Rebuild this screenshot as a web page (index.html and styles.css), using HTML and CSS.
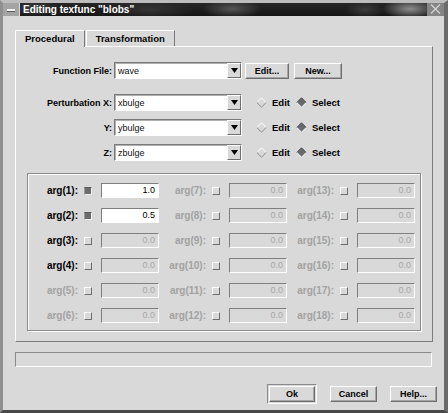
FILE: index.html
```html
<!DOCTYPE html>
<html>
<head>
<meta charset="utf-8">
<link rel="stylesheet" href="styles.css">
</head>
<body>
<div class="window">
  <div class="titlebar">
    <div class="tb-menu"><span class="dash"></span></div>
    <div class="tb-title">Editing texfunc "blobs"</div>
    <div class="tb-close">
      <svg width="17" height="13" viewBox="0 0 17 13"><path d="M4 1.5 L13 10.5 M13 1.5 L4 10.5" stroke="#d4d4d4" stroke-width="1.3" fill="none"/></svg>
    </div>
  </div>
  <div class="content">
    <div class="tabs">
      <div class="tab active">Procedural</div>
      <div class="tab">Transformation</div>
    </div>
    <div class="panel">
      <div class="frow">
        <div class="flabel">Function File:</div>
        <div class="combo"><span class="ctext">wave</span><span class="carrow"><svg width="7" height="6" viewBox="0 0 7 6"><path d="M0 0 H7 L3.5 5 Z" fill="#000"/></svg></span></div>
        <div class="btn btn-edit">Edit...</div>
        <div class="btn btn-new">New...</div>
      </div>
      <div class="frow frow-x">
        <div class="flabel">Perturbation X:</div>
        <div class="combo"><span class="ctext">xbulge</span><span class="carrow"><svg width="7" height="6" viewBox="0 0 7 6"><path d="M0 0 H7 L3.5 5 Z" fill="#000"/></svg></span></div>
        <div class="radios">
          <svg class="dia" width="11" height="11" viewBox="0 0 11 11"><polyline points="0.8,5.5 5.5,0.8 10.2,5.5" stroke="#fff" fill="none"/><polyline points="0.8,5.5 5.5,10.2 10.2,5.5" stroke="#8a8a8a" fill="none"/></svg>
          <span class="rtext">Edit</span>
          <svg class="dia dia-sel" width="11" height="11" viewBox="0 0 11 11"><polygon points="5.5,0.8 10.2,5.5 5.5,10.2 0.8,5.5" fill="#6a6a6a"/><polyline points="0.8,5.5 5.5,0.8 10.2,5.5" stroke="#4a4a4a" fill="none"/><polyline points="0.8,5.5 5.5,10.2 10.2,5.5" stroke="#fff" fill="none"/></svg>
          <span class="rtext">Select</span>
        </div>
      </div>
      <div class="frow frow-yz">
        <div class="flabel">Y:</div>
        <div class="combo"><span class="ctext">ybulge</span><span class="carrow"><svg width="7" height="6" viewBox="0 0 7 6"><path d="M0 0 H7 L3.5 5 Z" fill="#000"/></svg></span></div>
        <div class="radios">
          <svg class="dia" width="11" height="11" viewBox="0 0 11 11"><polyline points="0.8,5.5 5.5,0.8 10.2,5.5" stroke="#fff" fill="none"/><polyline points="0.8,5.5 5.5,10.2 10.2,5.5" stroke="#8a8a8a" fill="none"/></svg>
          <span class="rtext">Edit</span>
          <svg class="dia dia-sel" width="11" height="11" viewBox="0 0 11 11"><polygon points="5.5,0.8 10.2,5.5 5.5,10.2 0.8,5.5" fill="#6a6a6a"/><polyline points="0.8,5.5 5.5,0.8 10.2,5.5" stroke="#4a4a4a" fill="none"/><polyline points="0.8,5.5 5.5,10.2 10.2,5.5" stroke="#fff" fill="none"/></svg>
          <span class="rtext">Select</span>
        </div>
      </div>
      <div class="frow frow-yz">
        <div class="flabel">Z:</div>
        <div class="combo"><span class="ctext">zbulge</span><span class="carrow"><svg width="7" height="6" viewBox="0 0 7 6"><path d="M0 0 H7 L3.5 5 Z" fill="#000"/></svg></span></div>
        <div class="radios">
          <svg class="dia" width="11" height="11" viewBox="0 0 11 11"><polyline points="0.8,5.5 5.5,0.8 10.2,5.5" stroke="#fff" fill="none"/><polyline points="0.8,5.5 5.5,10.2 10.2,5.5" stroke="#8a8a8a" fill="none"/></svg>
          <span class="rtext">Edit</span>
          <svg class="dia dia-sel" width="11" height="11" viewBox="0 0 11 11"><polygon points="5.5,0.8 10.2,5.5 5.5,10.2 0.8,5.5" fill="#6a6a6a"/><polyline points="0.8,5.5 5.5,0.8 10.2,5.5" stroke="#4a4a4a" fill="none"/><polyline points="0.8,5.5 5.5,10.2 10.2,5.5" stroke="#fff" fill="none"/></svg>
          <span class="rtext">Select</span>
        </div>
      </div>

      <div class="group">
        <div class="alabel">arg(1):</div><div class="cbcell"><span class="cb on"></span></div><div class="field en">1.0</div>
        <div class="alabel dis">arg(7):</div><div class="cbcell"><span class="cb"></span></div><div class="field">0.0</div>
        <div class="alabel dis">arg(13):</div><div class="cbcell"><span class="cb"></span></div><div class="field">0.0</div>

        <div class="alabel">arg(2):</div><div class="cbcell"><span class="cb on"></span></div><div class="field en">0.5</div>
        <div class="alabel dis">arg(8):</div><div class="cbcell"><span class="cb"></span></div><div class="field">0.0</div>
        <div class="alabel dis">arg(14):</div><div class="cbcell"><span class="cb"></span></div><div class="field">0.0</div>

        <div class="alabel">arg(3):</div><div class="cbcell"><span class="cb"></span></div><div class="field">0.0</div>
        <div class="alabel dis">arg(9):</div><div class="cbcell"><span class="cb"></span></div><div class="field">0.0</div>
        <div class="alabel dis">arg(15):</div><div class="cbcell"><span class="cb"></span></div><div class="field">0.0</div>

        <div class="alabel">arg(4):</div><div class="cbcell"><span class="cb"></span></div><div class="field">0.0</div>
        <div class="alabel dis">arg(10):</div><div class="cbcell"><span class="cb"></span></div><div class="field">0.0</div>
        <div class="alabel dis">arg(16):</div><div class="cbcell"><span class="cb"></span></div><div class="field">0.0</div>

        <div class="alabel dis">arg(5):</div><div class="cbcell"><span class="cb"></span></div><div class="field">0.0</div>
        <div class="alabel dis">arg(11):</div><div class="cbcell"><span class="cb"></span></div><div class="field">0.0</div>
        <div class="alabel dis">arg(17):</div><div class="cbcell"><span class="cb"></span></div><div class="field">0.0</div>

        <div class="alabel dis">arg(6):</div><div class="cbcell"><span class="cb"></span></div><div class="field">0.0</div>
        <div class="alabel dis">arg(12):</div><div class="cbcell"><span class="cb"></span></div><div class="field">0.0</div>
        <div class="alabel dis">arg(18):</div><div class="cbcell"><span class="cb"></span></div><div class="field">0.0</div>
      </div>
    </div>
    <div class="status"></div>
    <div class="buttons">
      <div class="defring"><div class="btn dbtn">Ok</div></div>
      <div class="btn dbtn">Cancel</div>
      <div class="btn dbtn">Help...</div>
    </div>
  </div>
</div>
</body>
</html>
```

FILE: styles.css
```css
* { box-sizing: border-box; }
html, body { margin: 0; padding: 0; }
body {
  width: 448px;
  height: 413px;
  overflow: hidden;
  background: #d9d9d9;
  font-family: "Liberation Sans", Arial, Helvetica, sans-serif;
  color: #000;
}
.window {
  width: 448px;
  height: 413px;
  display: flex;
  flex-direction: column;
  background: #d9d9d9;
  border-top: 3px solid #bdbdbd;
  border-left: 3px solid #8f8f8f;
  border-right: 4px solid #6b6b6b;
  border-bottom: 3px solid #484848;
}
.titlebar {
  display: flex;
  height: 13px;
  flex: none;
}
.tb-menu {
  width: 16px;
  background: #a4a4a4;
  display: flex;
  align-items: center;
  justify-content: center;
}
.dash {
  width: 8px;
  height: 2px;
  background: #f2f2f2;
  box-shadow: 0 1px 0 #5a5a5a;
}
.tb-title {
  flex: 1;
  margin-left: 1px;
  color: #fff;
  font-weight: bold;
  font-size: 10px;
  line-height: 13px;
  padding-left: 3px;
  white-space: nowrap;
  background:
    radial-gradient(ellipse 28px 10px at 390px 6px, rgba(160,160,160,0.85), rgba(160,160,160,0) 100%),
    radial-gradient(ellipse 20px 8px at 345px 7px, rgba(90,90,90,0.5), rgba(90,90,90,0) 100%),
    radial-gradient(ellipse 30px 9px at 212px 6px, rgba(120,120,120,0.6), rgba(120,120,120,0) 100%),
    radial-gradient(ellipse 45px 9px at 130px 7px, rgba(80,80,80,0.45), rgba(80,80,80,0) 100%),
    radial-gradient(ellipse 25px 8px at 15px 6px, rgba(90,90,90,0.5), rgba(90,90,90,0) 100%),
    linear-gradient(#262626, #161616);
}
.tb-close {
  width: 17px;
  background: #858585;
  display: flex;
}
.content {
  flex: 1;
  display: flex;
  flex-direction: column;
  padding: 14px 0 0 12px;
}
.tabs {
  display: flex;
  height: 16px;
  flex: none;
}
.tab {
  font-weight: bold;
  font-size: 9.5px;
  line-height: 15px;
  padding: 0 9px;
  border-top: 1px solid #fff;
  border-left: 1px solid #fff;
  border-right: 1px solid #7a7a7a;
  margin-right: 1px;
  background: #d9d9d9;
  white-space: nowrap;
}
.tab.active {
  height: 17px;
  position: relative;
  z-index: 1;
  margin-bottom: -1px;
}
.panel {
  width: 418px;
  height: 296px;
  flex: none;
  border-top: 1px solid #fff;
  border-left: 1px solid #fff;
  border-right: 1px solid #7c7c7c;
  border-bottom: 1px solid #7c7c7c;
  padding: 15px 10px 0 0;
}
.frow {
  display: flex;
  align-items: center;
  height: 17px;
}
.frow-x { margin-top: 15px; }
.frow-yz { margin-top: 8px; }
.flabel {
  width: 96px;
  margin-right: 2px;
  text-align: right;
  font-weight: bold;
  font-size: 9px;
  white-space: nowrap;
}
.combo {
  width: 128px;
  height: 17px;
  display: flex;
  border: 1px solid;
  border-color: #7a7a7a #fff #fff #7a7a7a;
  background: #fff;
}
.ctext {
  flex: 1;
  font-size: 9px;
  line-height: 15px;
  padding-left: 2px;
  border-top: 1px solid #b0b0b0;
  border-left: 1px solid #b0b0b0;
  color: #111;
}
.carrow {
  width: 14px;
  background: #d9d9d9;
  border: 1px solid;
  border-color: #fff #6e6e6e #6e6e6e #fff;
  display: flex;
  align-items: center;
  justify-content: center;
}
.btn {
  height: 16px;
  display: flex;
  align-items: center;
  justify-content: center;
  font-weight: bold;
  font-size: 9px;
  border: 1px solid;
  border-color: #fff #6e6e6e #6e6e6e #fff;
  box-shadow: inset -1px -1px 0 #a6a6a6;
  background: #d9d9d9;
}
.btn-edit { width: 44px; margin-left: 3px; }
.btn-new { width: 48px; margin-left: 5px; }
.radios {
  display: flex;
  align-items: center;
  margin-left: 14px;
}
.dia { display: block; }
.rtext {
  font-weight: bold;
  font-size: 9.5px;
  margin-left: 5px;
  margin-right: 6px;
}
.group {
  margin: 12px 0 0 11px;
  width: 394px;
  height: 158px;
  border: 1px solid #8a8a8a;
  box-shadow: inset 1px 1px 0 #fff, 1px 1px 0 #fff;
  padding: 4px 5px 0 3px;
  display: grid;
  grid-template-columns: 47px 23px 58px 47px 23px 58px 47px 23px 58px;
  grid-auto-rows: 25px;
  align-items: center;
}
.alabel {
  text-align: right;
  font-weight: bold;
  font-size: 10px;
  white-space: nowrap;
}
.alabel.dis { color: #a2a2a2; }
.cbcell { display: flex; padding-left: 6px; }
.cb {
  width: 8px;
  height: 8px;
  border: 1px solid;
  border-color: #fff #6e6e6e #6e6e6e #fff;
  background: #d9d9d9;
}
.cb.on {
  background: #6c6c6c;
  border-color: #5a5a5a #f0f0f0 #f0f0f0 #9a9a9a;
}
.field {
  height: 15px;
  border: 1px solid;
  border-color: #7f7f7f #fff #fff #7f7f7f;
  font-size: 9px;
  line-height: 13px;
  text-align: right;
  padding-right: 3px;
  color: #a6a6a6;
}
.field.en {
  background: #fff;
  color: #000;
}
.status {
  width: 417px;
  height: 15px;
  margin-top: 10px;
  flex: none;
  border: 1px solid;
  border-color: #8a8a8a #fff #fff #8a8a8a;
}
.buttons {
  display: flex;
  justify-content: flex-end;
  align-items: center;
  margin-top: 17px;
  padding-right: 7px;
  gap: 13px;
  height: 19px;
}
.defring {
  padding: 1px;
  border: 1px solid;
  border-color: #8a8a8a #fff #fff #8a8a8a;
}
.dbtn { width: 47px; height: 16px; }
.defring .dbtn { width: 46px; }
```
